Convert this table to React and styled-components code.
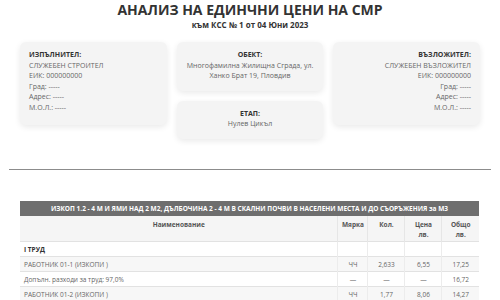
import React from 'react'
import styled, { createGlobalStyle } from 'styled-components'

const GlobalStyle = createGlobalStyle`
  body {
    margin: 0;
    background: #ffffff;
    font-family: "Open Sans", "Noto Sans", sans-serif;
    color: #555;
  }
`

const parties = {
  contractor: {
    label: 'ИЗПЪЛНИТЕЛ:',
    lines: ['СЛУЖЕБЕН СТРОИТЕЛ', 'ЕИК: 000000000', 'Град: -----', 'Адрес: -----', 'М.О.Л.: -----'],
  },
  client: {
    label: 'ВЪЗЛОЖИТЕЛ:',
    lines: ['СЛУЖЕБЕН ВЪЗЛОЖИТЕЛ', 'ЕИК: 000000000', 'Град: -----', 'Адрес: -----', 'М.О.Л.: -----'],
  },
}

const rows = [
  { name: 'I ТРУД', section: true },
  { name: 'РАБОТНИК 01-1 (ИЗКОПИ )', unit: 'ЧЧ', qty: '2,633', price: '6,55', total: '17,25', shade: true },
  { name: 'Допълн. разходи за труд: 97,0%', unit: '—', qty: '—', price: '—', total: '16,72' },
  { name: 'РАБОТНИК 01-2 (ИЗКОПИ )', unit: 'ЧЧ', qty: '1,77', price: '8,06', total: '14,27', shade: true },
]

function PartyCard({ party, align }) {
  return (
    <Card $align={align}>
      <Label>{party.label}</Label>
      {party.lines.map((l) => (
        <Line key={l}>{l}</Line>
      ))}
    </Card>
  )
}

export default function App() {
  return (
    <Page>
      <GlobalStyle />
      <Title>АНАЛИЗ НА ЕДИНЧНИ ЦЕНИ НА СМР</Title>
      <Subtitle>към КСС № 1 от 04 Юни 2023</Subtitle>

      <InfoGrid>
        <PartyCard party={parties.contractor} align="left" />
        <MiddleColumn>
          <Card $align="center" $compact>
            <Label>ОБЕКТ:</Label>
            <Line>Многофамилна Жилищна Сграда, ул.</Line>
            <Line>Ханко Брат 19, Пловдив</Line>
          </Card>
          <Card $align="center" $compact>
            <Label>ЕТАП:</Label>
            <Line>Нулев Цикъл</Line>
          </Card>
        </MiddleColumn>
        <PartyCard party={parties.client} align="right" />
      </InfoGrid>

      <Divider />

      <Table>
        <colgroup>
          <col />
          <col width="30" />
          <col width="37" />
          <col width="37" />
          <col width="37" />
        </colgroup>
        <thead>
          <tr>
            <Caption colSpan={5}>
              ИЗКОП 1.2 - 4 М И ЯМИ НАД 2 М2, ДЪЛБОЧИНА 2 - 4 М В СКАЛНИ ПОЧВИ В НАСЕЛЕНИ МЕСТА И ДО СЪОРЪЖЕНИЯ за М3
            </Caption>
          </tr>
          <tr>
            <Head>Наименование</Head>
            <Head>Мярка</Head>
            <Head>Кол.</Head>
            <Head>Цена<br />лв.</Head>
            <Head>Общо<br />лв.</Head>
          </tr>
        </thead>
        <tbody>
          {rows.map((r) => (
            <Row key={r.name} $shade={r.shade}>
              <NameCell $bold={r.section}>{r.name}</NameCell>
              <Cell>{r.unit}</Cell>
              <Cell>{r.qty}</Cell>
              <Cell>{r.price}</Cell>
              <Cell>{r.total}</Cell>
            </Row>
          ))}
        </tbody>
      </Table>
    </Page>
  )
}

const Page = styled.div`
  width: 500px;
  padding: 0 9px;
  box-sizing: border-box;
`

const Title = styled.h1`
  margin: 0;
  text-align: center;
  font-size: 14px;
  line-height: 20px;
  font-weight: 700;
  color: #333;
`

const Subtitle = styled.div`
  text-align: center;
  font-size: 8px;
  line-height: 10px;
  font-weight: 700;
  color: #333;
`

const InfoGrid = styled.div`
  display: grid;
  grid-template-columns: 1fr 1fr 1fr;
  gap: 10px;
  align-items: start;
  margin: 12px 11px 0;
`

const MiddleColumn = styled.div`
  display: flex;
  flex-direction: column;
  gap: 10px;
`

const Card = styled.div`
  background: #f4f4f4;
  border-radius: 6px;
  box-shadow: 0 2px 6px rgba(0, 0, 0, 0.09);
  padding: ${(p) => (p.$compact ? '8px 8px 9px' : '8px 9px 12px')};
  text-align: ${(p) => p.$align};
`

const Label = styled.div`
  font-size: 7px;
  line-height: 10.5px;
  font-weight: 700;
  color: #333;
`

const Line = styled.div`
  font-size: 7px;
  line-height: 10.5px;
  color: #666;
`

const Divider = styled.hr`
  margin: 30px 0 0;
  border: 0;
  border-top: 1.5px solid #8c8c8c;
`

const Table = styled.table`
  width: 459px;
  margin: 31px 0 0 11px;
  border-collapse: collapse;
  table-layout: fixed;
  font-size: 6.5px;
  color: #666;
`

const Caption = styled.th`
  background: #6e6e6e;
  color: #fff;
  font-weight: 700;
  height: 15px;
  padding: 0;
  text-align: center;
  white-space: nowrap;
  overflow: visible;
`

const Head = styled.th`
  background: #f5f5f5;
  color: #555;
  font-weight: 700;
  height: 26px;
  padding: 4px 0 0;
  vertical-align: top;
  line-height: 10px;
  text-align: center;
  border-right: 1px solid #e6e6e6;
  box-sizing: border-box;

  &:last-child {
    border-right: 0;
  }
`

const Row = styled.tr`
  background: ${(p) => (p.$shade ? '#f7f7f7' : '#ffffff')};
  border-top: 1px solid #e2e2e2;
`

const Cell = styled.td`
  height: 14px;
  padding: 0;
  text-align: center;
  border-left: 1px solid #ececec;
`

const NameCell = styled.td`
  height: 14px;
  padding: 0 0 0 4px;
  text-align: left;
  white-space: nowrap;
  font-weight: ${(p) => (p.$bold ? 700 : 400)};
  color: ${(p) => (p.$bold ? '#333' : '#666')};
`
